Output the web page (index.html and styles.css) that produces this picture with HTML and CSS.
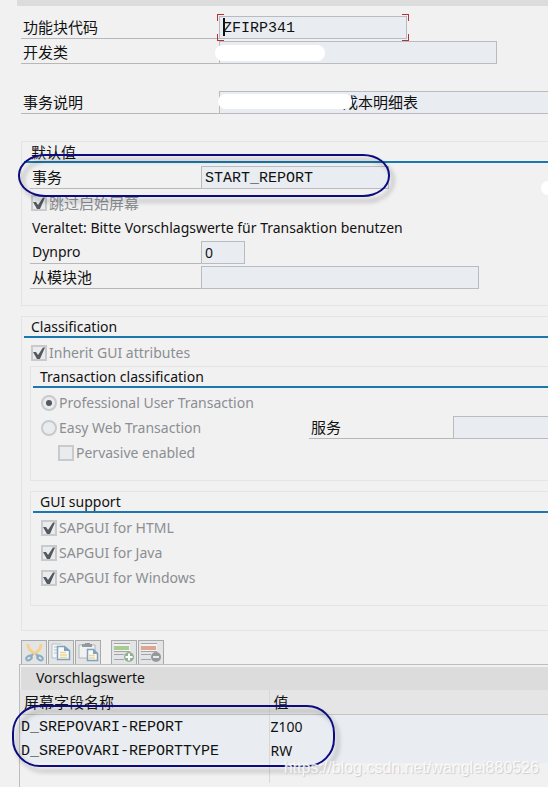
FILE: index.html
```html
<!DOCTYPE html>
<html lang="zh-CN">
<head>
    <meta charset="UTF-8">
    <meta name="viewport" content="width=device-width, initial-scale=1.0">
    <title>ZFIRP341</title>
    <link rel="stylesheet" href="styles.css">
</head>
<body>
    <div class="page">
        <div class="top-bar"></div>

        <form class="header-form">
            <div class="row">
                <label class="row-label cjk" for="tcode">功能块代码</label>
                <div class="field field-code focused">
                    <input class="mono" id="tcode" type="text" value="ZFIRP341" readonly>
                    <span class="caret"></span>
                </div>
            </div>
            <div class="row">
                <label class="row-label cjk" for="package">开发类</label>
                <div class="field field-long">
                    <input id="package" type="text" readonly>
                    <span class="mask mask-package"></span>
                </div>
            </div>
            <div class="row-blank"></div>
            <div class="row">
                <label class="row-label cjk" for="ttext">事务说明</label>
                <div class="field field-fill">
                    <input class="ttext cjk" id="ttext" type="text" value="成本明细表" readonly>
                    <span class="mask mask-text"></span>
                </div>
            </div>
        </form>

        <section class="group defaults">
            <h2 class="cjk">默认值</h2>
            <div class="group-body">
                <div class="row">
                    <label class="row-label cjk" for="transaction">事务</label>
                    <div class="field field-code">
                        <input class="mono" id="transaction" type="text" value="START_REPORT" readonly>
                    </div>
                </div>
                <label class="option cjk"><input type="checkbox" checked disabled>跳过启始屏幕</label>
                <p>Veraltet: Bitte Vorschlagswerte für Transaktion benutzen</p>
                <div class="row">
                    <label class="row-label" for="dynpro">Dynpro</label>
                    <div class="field field-short">
                        <input id="dynpro" type="text" value="0" readonly>
                    </div>
                </div>
                <div class="row">
                    <label class="row-label cjk" for="pool">从模块池</label>
                    <div class="field field-long">
                        <input id="pool" type="text" readonly>
                    </div>
                </div>
            </div>
            <span class="marker marker-transaction"></span>
            <span class="mask mask-dot"></span>
        </section>

        <section class="group classification">
            <h2>Classification</h2>
            <div class="group-body">
                <label class="option"><input type="checkbox" checked disabled>Inherit GUI attributes</label>

                <section class="group inner">
                    <h2>Transaction classification</h2>
                    <div class="group-body">
                        <label class="option"><input type="radio" name="tclass" checked disabled>Professional User Transaction</label>
                        <div class="split">
                            <label class="option"><input type="radio" name="tclass" disabled>Easy Web Transaction</label>
                            <div class="row service">
                                <label class="row-label cjk" for="service">服务</label>
                                <div class="field field-fill">
                                    <input id="service" type="text" readonly>
                                </div>
                            </div>
                        </div>
                        <label class="option indent"><input type="checkbox" disabled>Pervasive enabled</label>
                    </div>
                </section>

                <section class="group inner">
                    <h2>GUI support</h2>
                    <div class="group-body">
                        <label class="option"><input type="checkbox" checked disabled>SAPGUI for HTML</label>
                        <label class="option"><input type="checkbox" checked disabled>SAPGUI for Java</label>
                        <label class="option"><input type="checkbox" checked disabled>SAPGUI for Windows</label>
                    </div>
                </section>
            </div>
        </section>

        <div class="toolbar">
            <button type="button" aria-label="Cut">
                <svg width="24" height="23" viewBox="0 0 24 23" fill="none">
                    <path d="M6 3c0 5 3 8 8 10M19 3c0 5-3 8-8 10" stroke="#f3d290" stroke-width="3"/>
                    <path d="M11 13l-3 3M14 13l3 3" stroke="#8badc2" stroke-width="2"/>
                    <ellipse cx="7" cy="17" rx="3" ry="2" transform="rotate(-35 7 17)" stroke="#8badc2" stroke-width="2"/>
                    <ellipse cx="18" cy="17" rx="3" ry="2" transform="rotate(35 18 17)" stroke="#8badc2" stroke-width="2"/>
                </svg>
            </button>
            <button type="button" aria-label="Copy">
                <svg width="24" height="23" viewBox="0 0 24 23" fill="none">
                    <path d="M12 3H3v14h4" fill="#f4f6f7" stroke="#b4c1c9"/>
                    <path d="M5 6h3M5 9h3M5 12h3" stroke="#b4c1c9"/>
                    <path d="M8.500 5.500h7l5 4v9h-12z" fill="#f7f9fa" stroke="#7ea3bb" stroke-width="1.500"/>
                    <path d="M15 5v5h6z" fill="#7ea3bb"/>
                    <path d="M11 11.500h6M11 14h7M11 16.500h7" stroke="#f1d698" stroke-width="1.500"/>
                </svg>
            </button>
            <button type="button" aria-label="Paste">
                <svg width="24" height="23" viewBox="0 0 24 23" fill="none">
                    <path d="M3 4h16v13H3z" fill="#f0f1f1" stroke="#b4b7b9"/>
                    <path d="M6 3h3V2h5v1h2v3H6z" fill="#95999c"/>
                    <path d="M11.500 8.500h6l4 4v7h-10z" fill="#f7f9fa" stroke="#7ea3bb" stroke-width="1.500"/>
                    <path d="M17 8v5h5z" fill="#7ea3bb"/>
                    <path d="M13 14.500h6M13 17h6" stroke="#f1d698" stroke-width="1.500"/>
                </svg>
            </button>
            <button class="spaced" type="button" aria-label="Insert row">
                <svg width="24" height="23" viewBox="0 0 24 23" fill="none">
                    <path d="M2 3h16v8H2z" fill="#f1f1f1"/>
                    <path d="M2 2.500h16M2 10.500h16M2 13.500h10M2 18.500h10" stroke="#a2a6a8"/>
                    <path d="M2 5h15v4H2z" fill="#a9cb8e"/>
                    <circle cx="17" cy="16" r="5" fill="#91b293"/>
                    <path d="M17 12.500v7M13.500 16h7" stroke="#fff" stroke-width="2"/>
                </svg>
            </button>
            <button type="button" aria-label="Delete row">
                <svg width="24" height="23" viewBox="0 0 24 23" fill="none">
                    <path d="M2 3h16v8H2z" fill="#f1f1f1"/>
                    <path d="M2 2.500h16M2 10.500h16M2 13.500h10M2 18.500h10" stroke="#a2a6a8"/>
                    <path d="M2 5h15v4H2z" fill="#e0a590"/>
                    <circle cx="17" cy="16" r="5" fill="#95999c"/>
                    <path d="M14 16h6" stroke="#e9e9e9" stroke-width="2"/>
                </svg>
            </button>
        </div>

        <div class="table-panel">
            <table>
                <caption>Vorschlagswerte</caption>
                <thead>
                    <tr><th class="name-col cjk">屏幕字段名称</th><th class="cjk">值</th></tr>
                </thead>
                <tbody>
                    <tr><td class="mono">D_SREPOVARI-REPORT</td><td>Z100</td></tr>
                    <tr><td class="mono">D_SREPOVARI-REPORTTYPE</td><td>RW</td></tr>
                    <tr class="empty"><td></td><td></td></tr>
                </tbody>
            </table>
            <span class="marker marker-values"></span>
            <span class="watermark">https://blog.csdn.net/wanglei880526</span>
        </div>
    </div>
</body>
</html>
```

FILE: styles.css
```css
* {
    box-sizing: border-box;
}
body {
    margin: 0;
    background: #f1f1f1;
    color: #111;
    font-family: "Noto Sans", "Noto Sans CJK SC", sans-serif;
    font-size: 14px;
    line-height: 20px;
}
.page {
    display: flex;
    flex-direction: column;
    min-height: 100vh;
    overflow: hidden;
}
.top-bar {
    height: 6px;
    margin-left: 17px;
    background: #dcdcdc;
}
.mono {
    font-family: "Liberation Mono", monospace;
    font-size: 15px;
}
.group .cjk, .cjk {
    font-family: "Noto Sans CJK SC", sans-serif;
    font-size: 15px;
    white-space: nowrap;
}

/* form rows */
.header-form {
    padding: 10px 0 0 21px;
}
.row {
    display: flex;
    height: 23px;
    margin-bottom: 2px;
}
.row-blank {
    height: 25px;
}
.row-label {
    flex: none;
    width: 171px;
    padding-left: 2px;
    border-bottom: 1px solid #b8b8b8;
    line-height: 22px;
}
.header-form .row-label {
    width: 198px;
}
.field {
    position: relative;
    flex: none;
}
.field-code {
    width: 188px;
}
.field-long {
    width: 278px;
}
.field-short {
    width: 44px;
}
.field-fill {
    flex: 1;
}
.field input {
    display: block;
    width: 100%;
    height: 23px;
    padding: 0 3px;
    border: 1px solid #b8bcc0;
    border-radius: 0;
    outline: none;
    background: #e9edf1;
    color: #111;
    font-family: "Noto Sans", sans-serif;
    font-size: 14px;
}
.field input.mono {
    padding-top: 2px;
    font-family: "Liberation Mono", monospace;
    font-size: 15px;
}
.field-fill input {
    border-right: none;
}
.field input.ttext {
    padding: 0 0 2px 123px;
    font-family: "Noto Sans CJK SC", sans-serif;
    font-size: 15px;
}

/* red corners round the field that has the focus */
.focused::before {
    content: "";
    position: absolute;
    inset: -2px;
    background:
        linear-gradient(#b5303c, #b5303c) 0 0 / 7px 1px,
        linear-gradient(#b5303c, #b5303c) 0 0 / 1px 7px,
        linear-gradient(#b5303c, #b5303c) 100% 0 / 7px 1px,
        linear-gradient(#b5303c, #b5303c) 100% 0 / 1px 7px,
        linear-gradient(#b5303c, #b5303c) 0 100% / 7px 1px,
        linear-gradient(#b5303c, #b5303c) 0 100% / 1px 7px,
        linear-gradient(#b5303c, #b5303c) 100% 100% / 7px 1px,
        linear-gradient(#b5303c, #b5303c) 100% 100% / 1px 7px;
    background-repeat: no-repeat;
    pointer-events: none;
}
.caret {
    position: absolute;
    left: 4px;
    top: 2px;
    width: 2px;
    height: 18px;
    background: #111;
}

/* group boxes */
.group {
    position: relative;
    margin-left: 21px;
    border: 1px solid #e4e4e4;
    border-right: none;
}
.group h2 {
    height: 21px;
    margin: 0 0 3px 2px;
    padding-left: 7px;
    border-bottom: 2px solid #1a78ae;
    font-size: 14px;
    font-weight: normal;
    line-height: 20px;
}
.group-body {
    padding: 0 0 14px 8px;
}
.defaults {
    margin-top: 25px;
}
.classification {
    margin-top: 10px;
}
.classification > .group-body {
    padding-bottom: 24px;
}
.inner {
    margin: 0 0 10px;
}
.inner:last-child {
    margin-bottom: 0;
}
.group p {
    height: 25px;
    margin: 0;
    padding-left: 2px;
    line-height: 24px;
    white-space: nowrap;
}
.split {
    display: flex;
}
.split .option {
    flex: none;
    width: 270px;
}
.service {
    flex: 1;
}
.service .row-label {
    width: 144px;
}

/* check boxes and radio buttons */
.option {
    display: flex;
    align-items: center;
    gap: 2px;
    height: 25px;
    padding-bottom: 1px;
    padding-left: 1px;
    color: #8b8e92;
}
.inner .option {
    padding-left: 2px;
}
.inner .indent {
    padding-left: 19px;
}
.option input {
    display: grid;
    place-items: center;
    flex: none;
    width: 16px;
    height: 16px;
    margin: 0;
    appearance: none;
    border: 2px solid #c9cacb;
    background: #e9ecef;
}
.option input[type="radio"] {
    border-radius: 50%;
}
.option input[type="checkbox"]:checked::before {
    content: "";
    width: 12px;
    height: 12px;
    background: #55585c;
    clip-path: polygon(0 42%, 25% 42%, 42% 67%, 83% 4%, 100% 4%, 58% 100%, 33% 100%);
}
.option input[type="radio"]:checked::before {
    content: "";
    width: 6px;
    height: 6px;
    border-radius: 50%;
    background: #55585c;
}

/* table with its buttons */
.toolbar {
    display: flex;
    gap: 1px;
    margin-top: 9px;
    padding-left: 21px;
}
.toolbar button {
    width: 26px;
    height: 24px;
    padding: 0;
    border: 1px solid #a9a9a9;
    border-bottom: none;
    background: #e3e4e5;
}
.toolbar svg {
    display: block;
}
.toolbar .spaced {
    margin-left: 9px;
}
.table-panel {
    position: relative;
    flex: 1;
    margin-left: 19px;
    padding-top: 2px;
    border-top: 1px solid #bdbdbd;
    border-left: 1px solid #bdbdbd;
}
table {
    width: 100%;
    border-collapse: collapse;
    table-layout: fixed;
}
caption {
    height: 23px;
    margin-left: 1px;
    padding-left: 15px;
    background: #dcdcdc;
    line-height: 22px;
    text-align: left;
}
th, td {
    height: 24px;
    padding: 0 1px;
    font-weight: normal;
    line-height: 23px;
    text-align: left;
}
th {
    border-bottom: 1px solid #c4c4c4;
    background: #e5e5e5;
}
th.cjk {
    padding-left: 4px;
}
td {
    background: #e9edf1;
}
td.mono {
    padding-top: 1px;
}
th + th, td + td {
    border-left: 1px solid #d6d8da;
}
.name-col {
    width: 249px;
}
.empty td {
    height: 20px;
    background: none;
}

/* things lying over the form */
.mask {
    position: absolute;
    border-radius: 8px;
    background: #fff;
}
.mask-package {
    left: -4px;
    top: 4px;
    width: 110px;
    height: 16px;
}
.mask-text {
    left: -1px;
    top: 3px;
    width: 134px;
    height: 15px;
}
.mask-dot {
    right: -7px;
    top: 39px;
    width: 14px;
    height: 14px;
}
.marker {
    position: absolute;
    border: 2px solid #0c0c80;
    border-radius: 28px;
    filter: drop-shadow(4px 5px 2px rgba(0, 0, 0, 0.3));
    pointer-events: none;
}
.marker-transaction {
    left: -4px;
    top: 12px;
    width: 372px;
    height: 43px;
    border-radius: 27px / 21px;
}
.marker-values {
    left: -8px;
    top: 40px;
    width: 323px;
    height: 62px;
}
.watermark {
    position: absolute;
    right: 9px;
    top: 93px;
    color: rgba(255, 255, 255, 0.8);
    font-family: "Liberation Sans", sans-serif;
    font-size: 16px;
    text-shadow: 1px 1px 1px #ccc;
}
```
